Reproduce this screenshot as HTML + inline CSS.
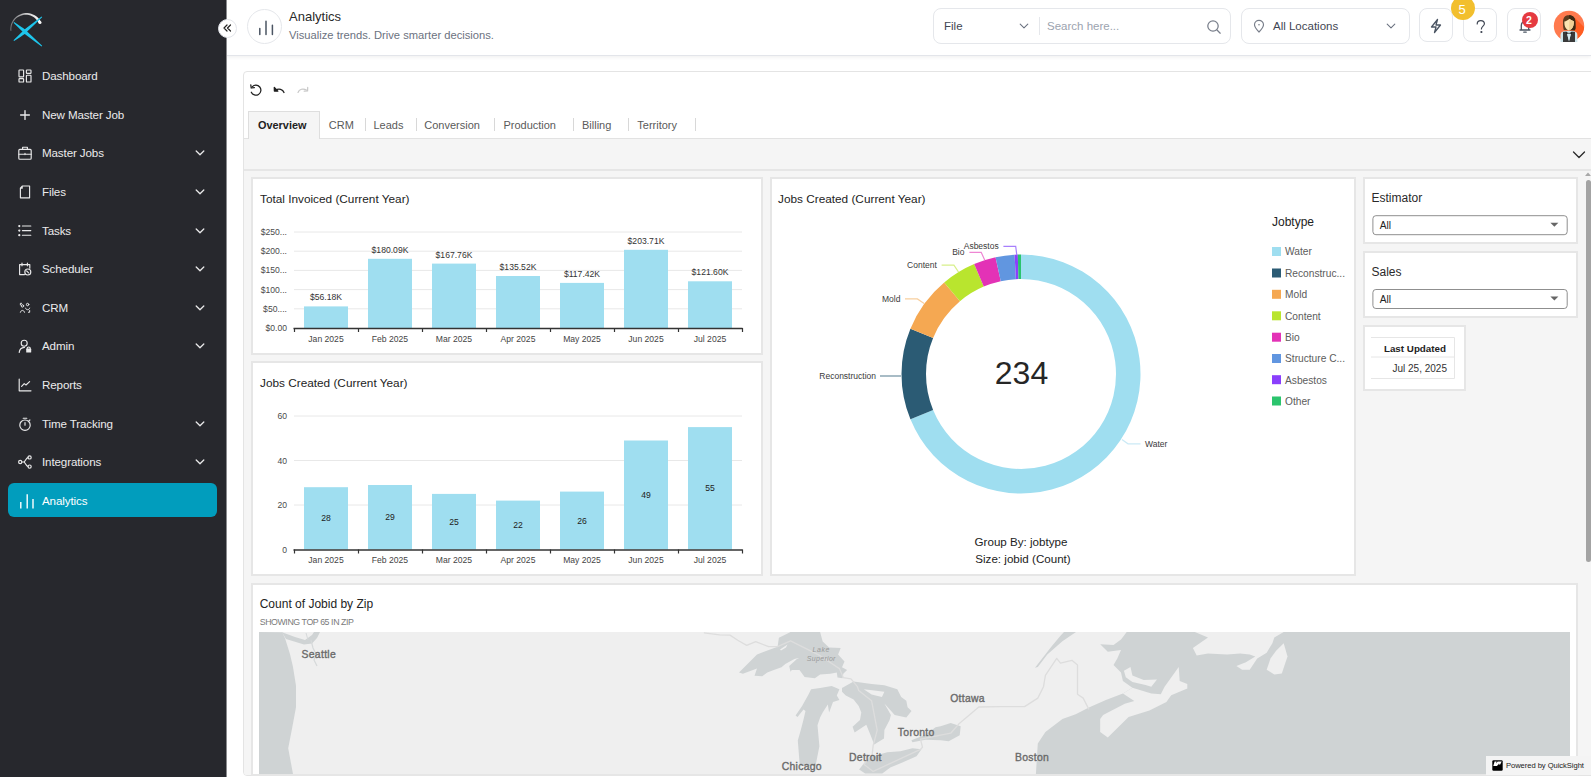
<!DOCTYPE html><html><head><meta charset="utf-8"><style>
*{box-sizing:border-box;margin:0;padding:0}
html,body{width:1591px;height:777px;overflow:hidden;background:#fff;font-family:"Liberation Sans",sans-serif;color:#222}
.a{position:absolute}
.t{position:absolute;white-space:nowrap;line-height:1}
#sb{position:absolute;left:0;top:0;width:226px;height:777px;background:#27282d}
.ni{position:absolute;left:0;width:226px;height:34px;color:#ebebec;font-size:11.6px;letter-spacing:-0.12px}
.ni .ic{position:absolute;left:18px;top:10px;width:14px;height:14px}
.ni .tx{position:absolute;left:42px;top:0;line-height:34px;white-space:nowrap}
.ni .ch{position:absolute;left:195px;top:13px;width:10px;height:8px}
#hdr{position:absolute;left:226px;top:0;width:1365px;height:56px;background:#fff;border-bottom:1.5px solid #e3e5ea;box-shadow:0 1px 4px rgba(0,0,0,0.07)}
.hb{position:absolute;border:1px solid #e5e7eb;border-radius:8px;background:#fff}
.card{position:absolute;background:#fff;border:2px solid #e6e6e6}
.ttl{position:absolute;font-size:11.8px;color:#232323;white-space:nowrap;line-height:1}
</style></head><body>
<div id="sb">
<svg class="a" style="left:0;top:0" width="60" height="55" viewBox="0 0 60 55">
<defs><linearGradient id="arcg" x1="10" y1="0" x2="41" y2="0" gradientUnits="userSpaceOnUse"><stop offset="0" stop-color="#6f7074"/><stop offset="0.5" stop-color="#c9c9ca"/><stop offset="1" stop-color="#ffffff"/></linearGradient></defs>
<path d="M10.39 30.85 L10.30 29.00 L10.43 27.16 L10.76 25.34 L11.31 23.57 L12.06 21.88 L12.99 20.28 L14.11 18.79 L15.39 17.45 L16.82 16.25 L18.38 15.23 L20.06 14.40 L21.82 13.76 L23.64 13.32 L25.51 13.10 L27.40 13.10 L29.28 13.32 L31.13 13.75 L32.93 14.39 L34.64 15.24 L36.25 16.29 L37.73 17.52 L39.07 18.91 L40.24 20.46 L41.24 22.14 L38.70 23.33 L37.99 21.86 L37.10 20.47 L36.06 19.20 L34.86 18.06 L33.53 17.06 L32.08 16.22 L30.54 15.56 L28.93 15.08 L27.27 14.80 L25.57 14.72 L23.88 14.83 L22.21 15.16 L20.58 15.67 L19.02 16.38 L17.55 17.27 L16.20 18.33 L14.98 19.55 L13.91 20.90 L13.01 22.37 L12.29 23.95 L11.76 25.59 L11.43 27.29 L11.30 29.02 L11.38 30.75 Z" fill="url(#arcg)"/>
<circle cx="40" cy="22.6" r="1.5" fill="#f4f4f4"/>
<path d="M41.61 16.56 L42.19 17.24 Q30.87 28.01 27.10 31.60 Q30.87 35.16 42.19 45.86 L41.61 46.54 Q28.99 37.06 24.78 33.90 Q22.11 35.69 14.09 41.05 L13.51 40.35 Q20.25 33.78 22.50 31.59 Q20.25 29.38 13.51 22.75 L14.09 22.05 Q22.11 27.49 24.78 29.30 Q28.99 26.11 41.61 16.56 Z" fill="#1ec6ec"/>
</svg>
<div class="ni" style="top:58.9px"><svg class="ic" viewBox="0 0 14 14" fill="none" stroke="#e9e9ea" stroke-width="1.15" stroke-linecap="round" stroke-linejoin="round"><rect x="1" y="1" width="4.6" height="6.8" rx="0.6"/><rect x="1" y="9.6" width="4.6" height="3.4" rx="0.6"/><rect x="8.4" y="1" width="4.6" height="3.4" rx="0.6"/><rect x="8.4" y="6.2" width="4.6" height="6.8" rx="0.6"/></svg><span class="tx">Dashboard</span></div>
<div class="ni" style="top:97.5px"><svg class="ic" viewBox="0 0 14 14" fill="none" stroke="#e9e9ea" stroke-width="1.15" stroke-linecap="round" stroke-linejoin="round"><path d="M7 2.6 V11.4 M2.6 7 H11.4" stroke-width="1.35"/></svg><span class="tx">New Master Job</span></div>
<div class="ni" style="top:136.2px"><svg class="ic" viewBox="0 0 14 14" fill="none" stroke="#e9e9ea" stroke-width="1.15" stroke-linecap="round" stroke-linejoin="round"><rect x="0.8" y="3.4" width="12.4" height="9.8" rx="1"/><path d="M4.6 3.4 V1.2 H9.4 V3.4 M0.8 8.2 H13.2 M7 7.4 V8.6"/></svg><span class="tx">Master Jobs</span><svg class="ch" viewBox="0 0 10 8"><path d="M1.2 2 L5 5.8 L8.8 2" fill="none" stroke="#e9e9ea" stroke-width="1.3" stroke-linecap="round" stroke-linejoin="round"/></svg></div>
<div class="ni" style="top:174.8px"><svg class="ic" viewBox="0 0 14 14" fill="none" stroke="#e9e9ea" stroke-width="1.15" stroke-linecap="round" stroke-linejoin="round"><path d="M4.2 1 H11.6 V12.8 H2.4 V3.2 Z M4.2 1 V3.2 H2.4"/></svg><span class="tx">Files</span><svg class="ch" viewBox="0 0 10 8"><path d="M1.2 2 L5 5.8 L8.8 2" fill="none" stroke="#e9e9ea" stroke-width="1.3" stroke-linecap="round" stroke-linejoin="round"/></svg></div>
<div class="ni" style="top:213.5px"><svg class="ic" viewBox="0 0 14 14" fill="none" stroke="#e9e9ea" stroke-width="1.15" stroke-linecap="round" stroke-linejoin="round"><path d="M4.4 2 H12.8 M4.4 6.6 H12.8 M4.4 11.2 H12.8"/><circle cx="1.3" cy="2" r="0.55" fill="#e9e9ea"/><circle cx="1.3" cy="6.6" r="0.55" fill="#e9e9ea"/><circle cx="1.3" cy="11.2" r="0.55" fill="#e9e9ea"/></svg><span class="tx">Tasks</span><svg class="ch" viewBox="0 0 10 8"><path d="M1.2 2 L5 5.8 L8.8 2" fill="none" stroke="#e9e9ea" stroke-width="1.3" stroke-linecap="round" stroke-linejoin="round"/></svg></div>
<div class="ni" style="top:252.2px"><svg class="ic" viewBox="0 0 14 14" fill="none" stroke="#e9e9ea" stroke-width="1.15" stroke-linecap="round" stroke-linejoin="round"><path d="M6.5 12.6 H1.6 V2.6 H11.8 V6.2 M4 1 V3.8 M9.4 1 V3.8 M1.6 2.6 H11.8"/><circle cx="9.8" cy="10" r="3"/><path d="M8.6 8.8 L10.6 10.8"/></svg><span class="tx">Scheduler</span><svg class="ch" viewBox="0 0 10 8"><path d="M1.2 2 L5 5.8 L8.8 2" fill="none" stroke="#e9e9ea" stroke-width="1.3" stroke-linecap="round" stroke-linejoin="round"/></svg></div>
<div class="ni" style="top:290.8px"><svg class="ic" viewBox="0 0 14 14" fill="none" stroke="#e9e9ea" stroke-width="1.15" stroke-linecap="round" stroke-linejoin="round"><g transform="translate(1 0.6) scale(0.86)"><circle cx="4" cy="5" r="1.4"/><circle cx="10" cy="3.4" r="1.4"/><path d="M1.6 12.4 C2.2 9.4 5.8 9.4 6.4 12.4 M7.6 7.6 C8.2 10.2 11.8 10.2 12.4 7.6 M1.6 3.8 V2 H3 M12.4 10.4 V12.4 H11"/></g></svg><span class="tx">CRM</span><svg class="ch" viewBox="0 0 10 8"><path d="M1.2 2 L5 5.8 L8.8 2" fill="none" stroke="#e9e9ea" stroke-width="1.3" stroke-linecap="round" stroke-linejoin="round"/></svg></div>
<div class="ni" style="top:329.4px"><svg class="ic" viewBox="0 0 14 14" fill="none" stroke="#e9e9ea" stroke-width="1.15" stroke-linecap="round" stroke-linejoin="round"><circle cx="6.2" cy="4.2" r="3"/><path d="M1.2 13.4 C1.6 10.2 3.6 8.6 6.4 8.4"/><rect x="8.2" y="9.6" width="5" height="3.9" rx="0.6" fill="#e9e9ea" stroke="none"/><path d="M9.2 9.8 V9 C9.2 7.6 12.2 7.6 12.2 9 V9.8"/></svg><span class="tx">Admin</span><svg class="ch" viewBox="0 0 10 8"><path d="M1.2 2 L5 5.8 L8.8 2" fill="none" stroke="#e9e9ea" stroke-width="1.3" stroke-linecap="round" stroke-linejoin="round"/></svg></div>
<div class="ni" style="top:368.1px"><svg class="ic" viewBox="0 0 14 14" fill="none" stroke="#e9e9ea" stroke-width="1.15" stroke-linecap="round" stroke-linejoin="round"><path d="M1.2 1 V12.8 H13 M3.6 8.4 L6.2 5.6 L8 7 L11.6 3.6"/></svg><span class="tx">Reports</span></div>
<div class="ni" style="top:406.7px"><svg class="ic" viewBox="0 0 14 14" fill="none" stroke="#e9e9ea" stroke-width="1.15" stroke-linecap="round" stroke-linejoin="round"><circle cx="7" cy="8.2" r="5.2"/><path d="M5.2 1.2 H8.8 M7 5.6 V8.2 M11 3.8 L11.9 3"/></svg><span class="tx">Time Tracking</span><svg class="ch" viewBox="0 0 10 8"><path d="M1.2 2 L5 5.8 L8.8 2" fill="none" stroke="#e9e9ea" stroke-width="1.3" stroke-linecap="round" stroke-linejoin="round"/></svg></div>
<div class="ni" style="top:445.4px"><svg class="ic" viewBox="0 0 14 14" fill="none" stroke="#e9e9ea" stroke-width="1.15" stroke-linecap="round" stroke-linejoin="round"><circle cx="2.2" cy="7" r="1.6"/><circle cx="11.6" cy="2.4" r="1.6"/><circle cx="11.6" cy="11.6" r="1.6"/><path d="M3.8 7 H5.6 C7.4 7 7.8 3 10 2.6 M5.6 7 C7.4 7 7.8 11 10 11.4"/></svg><span class="tx">Integrations</span><svg class="ch" viewBox="0 0 10 8"><path d="M1.2 2 L5 5.8 L8.8 2" fill="none" stroke="#e9e9ea" stroke-width="1.3" stroke-linecap="round" stroke-linejoin="round"/></svg></div>
<div class="a" style="left:8px;top:483px;width:209px;height:34px;background:#019dbd;border-radius:6px"></div>
<svg class="a" style="left:18px;top:491px" width="18" height="20" viewBox="0 0 18 20" fill="none" stroke="#fff" stroke-width="1.4"><path d="M2.8 11 V17.6 M9.2 3.3 V17.6 M15 8 V17.6"/></svg>
<span class="t" style="left:42px;top:494.5px;font-size:11.6px;letter-spacing:-0.12px;color:#fff">Analytics</span>
</div>
<div id="hdr"></div>
<div class="a" style="left:226px;top:0;width:1px;height:777px;background:#8a8b8e"></div>
<div class="a" style="left:217.5px;top:18.5px;width:19px;height:19px;border-radius:50%;background:#fff;border:1px solid #e3e5ea"></div>
<svg class="a" style="left:222px;top:23.2px" width="10" height="10" viewBox="0 0 10 10" fill="none" stroke="#222" stroke-width="1.2" stroke-linecap="round" stroke-linejoin="round"><path d="M5 2 L2 5 L5 8 M8.5 2 L5.5 5 L8.5 8"/></svg>
<div class="a" style="left:247px;top:9px;width:35px;height:35px;border-radius:50%;border:1px solid #e5e7eb"></div>
<svg class="a" style="left:254px;top:16px" width="22" height="22" viewBox="0 0 22 22" fill="none" stroke="#4b5563" stroke-width="1.5" stroke-linecap="round"><path d="M5.8 12.5 V18.5 M12 5.2 V18.5 M18.4 9.2 V18.5"/></svg>
<span class="t" style="left:289px;top:10px;font-size:13px;color:#2a2a2a">Analytics</span>
<span class="t" style="left:289px;top:29.6px;font-size:11.2px;color:#6b7280">Visualize trends. Drive smarter decisions.</span>
<div class="hb" style="left:933px;top:8px;width:298px;height:35.5px"></div>
<span class="t" style="left:944px;top:21px;font-size:11.5px;color:#3f4653">File</span>
<svg class="a" style="left:1019px;top:22px" width="10" height="8" viewBox="0 0 10 8" fill="none" stroke="#6b7280" stroke-width="1.1" stroke-linecap="round" stroke-linejoin="round"><path d="M1.2 2.2 L5 5.8 L8.8 2.2"/></svg>
<div class="a" style="left:1039px;top:17px;width:1px;height:18px;background:#e5e7eb"></div>
<span class="t" style="left:1047px;top:21px;font-size:11.5px;color:#9ca3af">Search here...</span>
<svg class="a" style="left:1205.5px;top:18.5px" width="16" height="16" viewBox="0 0 16 16" fill="none" stroke="#787e8a" stroke-width="1.25" stroke-linecap="round"><circle cx="7" cy="7" r="5.2"/><path d="M11 11 L14.2 14.2"/></svg>
<div class="hb" style="left:1241px;top:8px;width:169px;height:35.5px"></div>
<svg class="a" style="left:1252px;top:19px" width="14" height="14" viewBox="0 0 14 14" fill="none" stroke="#787e8a" stroke-width="1.15"><path d="M7 13 C7 13 11.5 8.5 11.5 5.8 C11.5 3.2 9.5 1.4 7 1.4 C4.5 1.4 2.5 3.2 2.5 5.8 C2.5 8.5 7 13 7 13 Z"/><circle cx="7" cy="5.8" r="0.8" fill="#787e8a" stroke="none"/></svg>
<span class="t" style="left:1273px;top:21px;font-size:11.5px;color:#3f4653">All Locations</span>
<svg class="a" style="left:1386px;top:22px" width="10" height="8" viewBox="0 0 10 8" fill="none" stroke="#6b7280" stroke-width="1.1" stroke-linecap="round" stroke-linejoin="round"><path d="M1.2 2.2 L5 5.8 L8.8 2.2"/></svg>
<div class="hb" style="left:1419px;top:8.4px;width:34px;height:33.2px"></div>
<div class="hb" style="left:1463px;top:8.4px;width:34px;height:33.2px"></div>
<div class="hb" style="left:1507px;top:8.4px;width:34px;height:33.2px"></div>
<svg class="a" style="left:1428px;top:18px" width="16" height="16" viewBox="0 0 16 16" fill="none" stroke="#4b5563" stroke-width="1.3" stroke-linejoin="round" stroke-linecap="round"><path d="M9.5 1.5 L3.5 9 H8 L6.5 14.5 L12.5 7 H8 Z"/></svg>
<svg class="a" style="left:1474px;top:19px" width="14" height="16" viewBox="0 0 14 16" fill="none" stroke="#3f4653" stroke-width="1.2" stroke-linecap="round"><path d="M3.2 5 C3.2 2.8 4.8 1.6 6.8 1.6 C8.8 1.6 10.4 2.9 10.4 4.8 C10.4 7 7.4 7.4 7.4 10"/><circle cx="7.4" cy="13" r="0.5" fill="#3f4653"/></svg>
<svg class="a" style="left:1517px;top:18px" width="16" height="16" viewBox="0 0 16 16" fill="none" stroke="#4b5563" stroke-width="1.3" stroke-linecap="round"><path d="M3 12 H13 M4.3 12 V7.5 C4.3 5 6 3.3 8 3.3 C10 3.3 11.7 5 11.7 7.5 V12 M6.8 14.2 H9.2"/></svg>
<div class="a" style="left:1451px;top:-4px;width:24px;height:24px;border-radius:50%;background:#f2bf2e"></div>
<span class="t" style="left:1458.5px;top:3px;font-size:13px;color:#fff">5</span>
<div class="a" style="left:1521.5px;top:12px;width:16px;height:16px;border-radius:50%;background:#e53a40"></div>
<span class="t" style="left:1526px;top:14.5px;font-size:10.5px;font-weight:bold;color:#fff">2</span>
<svg class="a" style="left:1553px;top:9px" width="32" height="34" viewBox="1553 9 32 34">
<defs><clipPath id="avc"><circle cx="1569" cy="26" r="15.2"/></clipPath></defs>
<circle cx="1569" cy="26" r="15.2" fill="#ff7a4e"/>
<g clip-path="url(#avc)">
<path d="M1575 18 L1590 33 L1590 45 L1572 45 Z" fill="#ff5d22"/>
</g>
<path d="M1560.5 42 L1560.5 35 C1560.5 32.5 1562 31.5 1565 31 L1573 31 C1576 31.5 1577.4 32.5 1577.4 35 L1577.4 42 Z" fill="#cfe6ec"/>
<path d="M1563 42 L1563 32 L1566.5 31.5 L1569 41 L1571.5 31.5 L1575 32 L1575 42 Z" fill="#3a3a3a"/>
<path d="M1567 33.5 L1569 41.5 L1571 33.5 Z" fill="#d8ecf1"/>
<path d="M1566 32 L1569 33 L1572 32 L1572 34 L1569 33.4 L1566 34 Z" fill="#222"/>
<path d="M1563 22 C1563 17 1565.5 15.2 1569 15.2 C1573 15.2 1575.4 17.5 1575.4 22 C1575.4 26 1576 29 1574.8 30.2 L1563.8 30 C1563 27 1563 25 1563 22 Z" fill="#5b3b1e"/>
<path d="M1569 15.2 C1573 15.2 1575.4 17.5 1575.4 22 C1575.4 26 1576 29 1574.8 30.2 L1569 30.2 Z" fill="#3f2812"/>
<path d="M1564.4 21.5 C1566 21.5 1568 20 1569.5 18.8 C1570.5 20 1572.5 21 1573.8 21.2 C1574 25 1573 29 1569 30.4 C1565.5 29.5 1564.2 26 1564.4 21.5 Z" fill="#fbe3b0"/>
<path d="M1569.5 18.8 C1570.5 20 1572.5 21 1573.8 21.2 C1574 25 1573 29 1569 30.4 Z" fill="#f1cf94"/>
</svg>
<div class="a" style="left:243px;top:71px;width:1360px;height:705px;border:1px solid #e4e4e4;border-radius:4px;background:#fff"></div>
<svg class="a" style="left:249px;top:83px" width="14" height="14" viewBox="0 0 14 14" fill="none" stroke="#1f1f1f" stroke-width="1.25" stroke-linecap="round" stroke-linejoin="round"><path d="M2.3 9.2 A5 5 0 1 0 3.2 3.8"/><path d="M1.8 1.8 L2.2 5 L5.4 4.6" fill="none"/></svg>
<svg class="a" style="left:272px;top:83px" width="14" height="14" viewBox="0 0 14 14" fill="none" stroke="#1f1f1f" stroke-width="1.3" stroke-linecap="round" stroke-linejoin="round"><path d="M12 9.5 C10.8 6.2 7 5 3.2 7.2"/><path d="M2.3 4.4 L2.4 8 L5.8 8.2 Z" fill="#1f1f1f"/></svg>
<svg class="a" style="left:296px;top:83px" width="14" height="14" viewBox="0 0 14 14" fill="none" stroke="#c8c8c8" stroke-width="1.2" stroke-linecap="round" stroke-linejoin="round"><path d="M2 9.5 C3.2 6.2 7 5 10.8 7.2"/><path d="M11.7 4.4 L11.6 8 L8.2 8.2"/></svg>
<div class="a" style="left:244px;top:137.5px;width:1347px;height:637.5px;background:#f5f5f5;border-top:1px solid #e2e2e2;border-bottom-left-radius:3px"></div>
<div class="a" style="left:248px;top:111px;width:72px;height:28px;background:#f5f5f5;border:1px solid #dedede;border-bottom:none"></div>
<span class="t" style="left:258px;top:120px;font-size:10.9px;font-weight:bold;color:#222">Overview</span>
<span class="t" style="left:328.8px;top:120px;font-size:11px;color:#5a5a5a">CRM</span>
<div class="a" style="left:364.5px;top:118px;width:1px;height:13px;background:#d8d8d8"></div>
<span class="t" style="left:373.5px;top:120px;font-size:11px;color:#5a5a5a">Leads</span>
<div class="a" style="left:415.7px;top:118px;width:1px;height:13px;background:#d8d8d8"></div>
<span class="t" style="left:424.3px;top:120px;font-size:11px;color:#5a5a5a">Conversion</span>
<div class="a" style="left:493.6px;top:118px;width:1px;height:13px;background:#d8d8d8"></div>
<span class="t" style="left:503.4px;top:120px;font-size:11px;color:#5a5a5a">Production</span>
<div class="a" style="left:572.5px;top:118px;width:1px;height:13px;background:#d8d8d8"></div>
<span class="t" style="left:582px;top:120px;font-size:11px;color:#5a5a5a">Billing</span>
<div class="a" style="left:628px;top:118px;width:1px;height:13px;background:#d8d8d8"></div>
<span class="t" style="left:637.3px;top:120px;font-size:11px;color:#5a5a5a">Territory</span>
<div class="a" style="left:695.4px;top:118px;width:1px;height:13px;background:#d8d8d8"></div>
<svg class="a" style="left:1572px;top:149.5px" width="14" height="10" viewBox="0 0 14 10" fill="none" stroke="#2a2a2a" stroke-width="1.3" stroke-linecap="round" stroke-linejoin="round"><path d="M1.5 2 L7 7.5 L12.5 2"/></svg>
<div class="a" style="left:244px;top:169px;width:1347px;height:1.5px;background:#e6e6e6"></div>
<svg class="a" style="left:1584px;top:170px" width="8" height="8" viewBox="0 0 8 8"><path d="M1 6 L4 2.5 L7 6 Z" fill="#a8a8a8"/></svg>
<div class="a" style="left:1586px;top:180px;width:4.5px;height:382px;border-radius:3px;background:#a3a3a3"></div>
<div class="card" style="left:251px;top:177.3px;width:512px;height:177.3px"></div>
<div class="card" style="left:251px;top:361px;width:512px;height:214.70000000000005px"></div>
<div class="card" style="left:770px;top:177.3px;width:585.5999999999999px;height:398.40000000000003px"></div>
<div class="card" style="left:1362.6px;top:177.2px;width:215.20000000000005px;height:67.0px"></div>
<div class="card" style="left:1362.6px;top:251.1px;width:215.20000000000005px;height:67.1px"></div>
<div class="card" style="left:1362.6px;top:325px;width:103.40000000000009px;height:66px"></div>
<div class="card" style="left:251px;top:582.6px;width:1326.8px;height:193.0px"></div>
<span class="ttl" style="left:260px;top:193.5px">Total Invoiced (Current Year)</span>
<span class="ttl" style="left:260px;top:377.5px">Jobs Created (Current Year)</span>
<span class="ttl" style="left:778px;top:193.5px">Jobs Created (Current Year)</span>
<svg class="a" style="left:0;top:0" width="1591" height="777" viewBox="0 0 1591 777" font-family="Liberation Sans, sans-serif">
<line x1="294" y1="308.8" x2="742" y2="308.8" stroke="#e8e8e8" stroke-width="1"/>
<line x1="294" y1="289.6" x2="742" y2="289.6" stroke="#e8e8e8" stroke-width="1"/>
<line x1="294" y1="270.4" x2="742" y2="270.4" stroke="#e8e8e8" stroke-width="1"/>
<line x1="294" y1="251.2" x2="742" y2="251.2" stroke="#e8e8e8" stroke-width="1"/>
<line x1="294" y1="232.0" x2="742" y2="232.0" stroke="#e8e8e8" stroke-width="1"/>
<text x="287" y="331.0" font-size="8.6" fill="#4a4a4a" text-anchor="end">$0.00</text>
<text x="287" y="311.8" font-size="8.6" fill="#4a4a4a" text-anchor="end">$50....</text>
<text x="287" y="292.6" font-size="8.6" fill="#4a4a4a" text-anchor="end">$100...</text>
<text x="287" y="273.4" font-size="8.6" fill="#4a4a4a" text-anchor="end">$150...</text>
<text x="287" y="254.2" font-size="8.6" fill="#4a4a4a" text-anchor="end">$200...</text>
<text x="287" y="235.0" font-size="8.6" fill="#4a4a4a" text-anchor="end">$250...</text>
<rect x="304" y="306.4" width="44" height="21.6" fill="#9fdef0"/>
<text x="326" y="300.4" font-size="8.6" fill="#333" text-anchor="middle">$56.18K</text>
<text x="326" y="341.5" font-size="8.6" fill="#444" text-anchor="middle">Jan 2025</text>
<rect x="368" y="258.8" width="44" height="69.2" fill="#9fdef0"/>
<text x="390" y="252.8" font-size="8.6" fill="#333" text-anchor="middle">$180.09K</text>
<text x="390" y="341.5" font-size="8.6" fill="#444" text-anchor="middle">Feb 2025</text>
<rect x="432" y="263.6" width="44" height="64.4" fill="#9fdef0"/>
<text x="454" y="257.6" font-size="8.6" fill="#333" text-anchor="middle">$167.76K</text>
<text x="454" y="341.5" font-size="8.6" fill="#444" text-anchor="middle">Mar 2025</text>
<rect x="496" y="276.0" width="44" height="52.0" fill="#9fdef0"/>
<text x="518" y="270.0" font-size="8.6" fill="#333" text-anchor="middle">$135.52K</text>
<text x="518" y="341.5" font-size="8.6" fill="#444" text-anchor="middle">Apr 2025</text>
<rect x="560" y="282.9" width="44" height="45.1" fill="#9fdef0"/>
<text x="582" y="276.9" font-size="8.6" fill="#333" text-anchor="middle">$117.42K</text>
<text x="582" y="341.5" font-size="8.6" fill="#444" text-anchor="middle">May 2025</text>
<rect x="624" y="249.8" width="44" height="78.2" fill="#9fdef0"/>
<text x="646" y="243.8" font-size="8.6" fill="#333" text-anchor="middle">$203.71K</text>
<text x="646" y="341.5" font-size="8.6" fill="#444" text-anchor="middle">Jun 2025</text>
<rect x="688" y="281.3" width="44" height="46.7" fill="#9fdef0"/>
<text x="710" y="275.3" font-size="8.6" fill="#333" text-anchor="middle">$121.60K</text>
<text x="710" y="341.5" font-size="8.6" fill="#444" text-anchor="middle">Jul 2025</text>
<line x1="293.5" y1="328.5" x2="742.5" y2="328.5" stroke="#333" stroke-width="1.3"/>
<line x1="294.5" y1="328.0" x2="294.5" y2="332.0" stroke="#333" stroke-width="1.2"/>
<line x1="358.5" y1="328.0" x2="358.5" y2="332.0" stroke="#333" stroke-width="1.2"/>
<line x1="422.5" y1="328.0" x2="422.5" y2="332.0" stroke="#333" stroke-width="1.2"/>
<line x1="486.5" y1="328.0" x2="486.5" y2="332.0" stroke="#333" stroke-width="1.2"/>
<line x1="550.5" y1="328.0" x2="550.5" y2="332.0" stroke="#333" stroke-width="1.2"/>
<line x1="614.5" y1="328.0" x2="614.5" y2="332.0" stroke="#333" stroke-width="1.2"/>
<line x1="678.5" y1="328.0" x2="678.5" y2="332.0" stroke="#333" stroke-width="1.2"/>
<line x1="742.5" y1="328.0" x2="742.5" y2="332.0" stroke="#333" stroke-width="1.2"/>
<text x="287" y="552.5" font-size="8.6" fill="#4a4a4a" text-anchor="end">0</text>
<line x1="294" y1="505.0" x2="742" y2="505.0" stroke="#e8e8e8" stroke-width="1"/>
<text x="287" y="508.0" font-size="8.6" fill="#4a4a4a" text-anchor="end">20</text>
<line x1="294" y1="460.5" x2="742" y2="460.5" stroke="#e8e8e8" stroke-width="1"/>
<text x="287" y="463.5" font-size="8.6" fill="#4a4a4a" text-anchor="end">40</text>
<line x1="294" y1="416.0" x2="742" y2="416.0" stroke="#e8e8e8" stroke-width="1"/>
<text x="287" y="419.0" font-size="8.6" fill="#4a4a4a" text-anchor="end">60</text>
<rect x="304" y="487.2" width="44" height="62.3" fill="#9fdef0"/>
<text x="326" y="521.4" font-size="8.6" fill="#222" text-anchor="middle">28</text>
<text x="326" y="563.0" font-size="8.6" fill="#444" text-anchor="middle">Jan 2025</text>
<rect x="368" y="485.0" width="44" height="64.5" fill="#9fdef0"/>
<text x="390" y="520.2" font-size="8.6" fill="#222" text-anchor="middle">29</text>
<text x="390" y="563.0" font-size="8.6" fill="#444" text-anchor="middle">Feb 2025</text>
<rect x="432" y="493.9" width="44" height="55.6" fill="#9fdef0"/>
<text x="454" y="524.7" font-size="8.6" fill="#222" text-anchor="middle">25</text>
<text x="454" y="563.0" font-size="8.6" fill="#444" text-anchor="middle">Mar 2025</text>
<rect x="496" y="500.6" width="44" height="48.9" fill="#9fdef0"/>
<text x="518" y="528.0" font-size="8.6" fill="#222" text-anchor="middle">22</text>
<text x="518" y="563.0" font-size="8.6" fill="#444" text-anchor="middle">Apr 2025</text>
<rect x="560" y="491.6" width="44" height="57.9" fill="#9fdef0"/>
<text x="582" y="523.6" font-size="8.6" fill="#222" text-anchor="middle">26</text>
<text x="582" y="563.0" font-size="8.6" fill="#444" text-anchor="middle">May 2025</text>
<rect x="624" y="440.5" width="44" height="109.0" fill="#9fdef0"/>
<text x="646" y="498.0" font-size="8.6" fill="#222" text-anchor="middle">49</text>
<text x="646" y="563.0" font-size="8.6" fill="#444" text-anchor="middle">Jun 2025</text>
<rect x="688" y="427.1" width="44" height="122.4" fill="#9fdef0"/>
<text x="710" y="491.3" font-size="8.6" fill="#222" text-anchor="middle">55</text>
<text x="710" y="563.0" font-size="8.6" fill="#444" text-anchor="middle">Jul 2025</text>
<line x1="293.5" y1="550.0" x2="742.5" y2="550.0" stroke="#333" stroke-width="1.3"/>
<line x1="294.5" y1="549.5" x2="294.5" y2="553.5" stroke="#333" stroke-width="1.2"/>
<line x1="358.5" y1="549.5" x2="358.5" y2="553.5" stroke="#333" stroke-width="1.2"/>
<line x1="422.5" y1="549.5" x2="422.5" y2="553.5" stroke="#333" stroke-width="1.2"/>
<line x1="486.5" y1="549.5" x2="486.5" y2="553.5" stroke="#333" stroke-width="1.2"/>
<line x1="550.5" y1="549.5" x2="550.5" y2="553.5" stroke="#333" stroke-width="1.2"/>
<line x1="614.5" y1="549.5" x2="614.5" y2="553.5" stroke="#333" stroke-width="1.2"/>
<line x1="678.5" y1="549.5" x2="678.5" y2="553.5" stroke="#333" stroke-width="1.2"/>
<line x1="742.5" y1="549.5" x2="742.5" y2="553.5" stroke="#333" stroke-width="1.2"/>
<path d="M1021.00 254.50 A119.5 119.5 0 1 1 910.44 419.36 L933.11 410.06 A95.0 95.0 0 1 0 1021.00 279.00 Z" fill="#9fdef0"/>
<path d="M910.44 419.36 A119.5 119.5 0 0 1 910.44 328.64 L933.11 337.94 A95.0 95.0 0 0 0 933.11 410.06 Z" fill="#2b5b74"/>
<path d="M910.44 328.64 A119.5 119.5 0 0 1 944.19 282.46 L959.94 301.23 A95.0 95.0 0 0 0 933.11 337.94 Z" fill="#f5a852"/>
<path d="M944.19 282.46 A119.5 119.5 0 0 1 974.16 264.06 L983.76 286.60 A95.0 95.0 0 0 0 959.94 301.23 Z" fill="#b9e52e"/>
<path d="M974.16 264.06 A119.5 119.5 0 0 1 995.53 257.25 L1000.75 281.18 A95.0 95.0 0 0 0 983.76 286.60 Z" fill="#e332b6"/>
<path d="M995.53 257.25 A119.5 119.5 0 0 1 1014.59 254.67 L1015.90 279.14 A95.0 95.0 0 0 0 1000.75 281.18 Z" fill="#6196e0"/>
<path d="M1014.59 254.67 A119.5 119.5 0 0 1 1017.79 254.54 L1018.45 279.03 A95.0 95.0 0 0 0 1015.90 279.14 Z" fill="#8a3ffc"/>
<path d="M1017.79 254.54 A119.5 119.5 0 0 1 1021.00 254.50 L1021.00 279.00 A95.0 95.0 0 0 0 1018.45 279.03 Z" fill="#2bc46d"/>
<text x="1021.5" y="384.2" font-size="32" fill="#262626" text-anchor="middle">234</text>
<path d="M1121.9 439.6 L1128 443.8 L1140.5 443.8" fill="none" stroke="#cbeaf6" stroke-width="1.2"/>
<text x="1145" y="446.8" font-size="8.5" fill="#3a3a3a" text-anchor="start">Water</text>
<path d="M901 376 L880 376" fill="none" stroke="#6e8fa0" stroke-width="1.2"/>
<text x="876" y="379" font-size="8.5" fill="#3a3a3a" text-anchor="end">Reconstruction</text>
<path d="M924.1 303.5 L917.4 298.9 L905 298.9" fill="none" stroke="#f8cf9f" stroke-width="1.2"/>
<text x="900.4" y="301.9" font-size="8.5" fill="#3a3a3a" text-anchor="end">Mold</text>
<path d="M958.6 272.1 L953.9 265.2 L941.6 265.2" fill="none" stroke="#d8f08a" stroke-width="1.2"/>
<text x="936.9" y="268.2" font-size="8.5" fill="#3a3a3a" text-anchor="end">Content</text>
<path d="M984.8 260.2 L981.2 252.3 L969.4 252.3" fill="none" stroke="#ee86d3" stroke-width="1.2"/>
<text x="964.5" y="255.3" font-size="8.5" fill="#3a3a3a" text-anchor="end">Bio</text>
<path d="M1016.8 255.1 L1015.7 246.3 L1003.4 246.3" fill="none" stroke="#a77ffc" stroke-width="1.2"/>
<text x="998.7" y="249.3" font-size="8.5" fill="#3a3a3a" text-anchor="end">Asbestos</text>
<text x="1272" y="226" font-size="12" fill="#222">Jobtype</text>
<rect x="1272" y="247.0" width="9" height="9" fill="#9fdef0"/>
<text x="1285" y="255.3" font-size="10.2" fill="#5c5c5c">Water</text>
<rect x="1272" y="268.5" width="9" height="9" fill="#2b5b74"/>
<text x="1285" y="276.8" font-size="10.2" fill="#5c5c5c">Reconstruc...</text>
<rect x="1272" y="289.8" width="9" height="9" fill="#f5a852"/>
<text x="1285" y="298.1" font-size="10.2" fill="#5c5c5c">Mold</text>
<rect x="1272" y="311.3" width="9" height="9" fill="#b9e52e"/>
<text x="1285" y="319.6" font-size="10.2" fill="#5c5c5c">Content</text>
<rect x="1272" y="332.7" width="9" height="9" fill="#e332b6"/>
<text x="1285" y="341.0" font-size="10.2" fill="#5c5c5c">Bio</text>
<rect x="1272" y="354.0" width="9" height="9" fill="#6196e0"/>
<text x="1285" y="362.3" font-size="10.2" fill="#5c5c5c">Structure C...</text>
<rect x="1272" y="375.2" width="9" height="9" fill="#8a3ffc"/>
<text x="1285" y="383.5" font-size="10.2" fill="#5c5c5c">Asbestos</text>
<rect x="1272" y="396.5" width="9" height="9" fill="#2bc46d"/>
<text x="1285" y="404.8" font-size="10.2" fill="#5c5c5c">Other</text>
<text x="1021" y="546" font-size="11.6" fill="#222" text-anchor="middle">Group By: jobtype</text>
<text x="1023" y="563" font-size="11.6" fill="#222" text-anchor="middle">Size: jobid (Count)</text>
<text x="1371.5" y="202.0" font-size="12" fill="#2a2a2a">Estimator</text>
<rect x="1372.9" y="215.7" width="194.3" height="19" rx="3" fill="#fff" stroke="#8f8f8f" stroke-width="1"/>
<text x="1379.7" y="228.7" font-size="10.2" fill="#222">All</text>
<path d="M1550.4 222.79999999999998 L1558.4 222.79999999999998 L1554.4 226.79999999999998 Z" fill="#666"/>
<text x="1371.5" y="275.7" font-size="12" fill="#2a2a2a">Sales</text>
<rect x="1372.9" y="289.5" width="194.3" height="19" rx="3" fill="#fff" stroke="#8f8f8f" stroke-width="1"/>
<text x="1379.7" y="302.5" font-size="10.2" fill="#222">All</text>
<path d="M1550.4 296.6 L1558.4 296.6 L1554.4 300.6 Z" fill="#666"/>
<path d="M1371 337.5 H1454.5 V378.5 H1371 M1371 357 H1454.5" fill="none" stroke="#e6e6e6" stroke-width="1"/>
<text x="1446" y="351.5" font-size="9.8" font-weight="bold" fill="#222" text-anchor="end">Last Updated</text>
<text x="1447" y="372" font-size="10" fill="#333" text-anchor="end">Jul 25, 2025</text>
</svg>
<span class="ttl" style="left:259.7px;top:597.5px;font-size:12px">Count of Jobid by Zip</span>
<span class="t" style="left:259.7px;top:617.8px;font-size:8.8px;letter-spacing:-0.42px;color:#7a7a7a">SHOWING TOP 65 IN ZIP</span>
<svg class="a" style="left:259px;top:632px" width="1311" height="142" viewBox="259 632 1311 142">
<rect x="259" y="632" width="1311" height="142" fill="#efefef"/>
<path d="M259.0 632.0 L282.3 632.3 L285.2 638.7 L290.1 654.4 L293.0 667.0 L296.0 685.7 L296.0 707.2 L292.0 728.7 L288.2 748.3 L293.0 774.0 L259.0 774.0 Z" fill="#cfd3d4"/>
<path d="M282.0 632.3 L295.0 637.0 L305.0 640.0 L312.0 635.0 L314.0 632.0 L320.0 632.0 L317.0 638.0 L312.0 643.5 L304.0 644.5 L286.0 639.0 Z" fill="#cfd3d4"/>
<path d="M311 640 L313 648 L316 654 L314 660 L317 666" fill="none" stroke="#d6d9da" stroke-width="1.2"/>
<path d="M306 633 L308 640" fill="none" stroke="#d6d9da" stroke-width="1"/>
<path d="M739.0 672.5 L757.0 654.5 L777.6 646.7 L778.9 637.7 L786.6 633.9 L790.5 632.0 L820.1 632.0 L822.7 641.6 L829.1 647.4 L840.7 648.0 L838.1 654.5 L844.5 661.5 L842.0 667.3 L847.1 669.9 L843.3 673.8 L842.6 678.3 L837.5 677.6 L836.8 672.5 L830.4 673.8 L820.1 674.4 L814.9 678.3 L804.6 677.0 L799.5 669.9 L791.8 669.9 L790.5 671.8 L789.2 666.0 L796.9 659.0 L799.5 657.7 L794.4 659.0 L785.3 664.1 L781.5 667.3 L773.8 669.9 L767.3 672.5 L762.2 676.3 L754.5 675.7 L757.0 668.6 L742.9 673.8 Z" fill="#cfd3d4"/>
<path d="M780.0 649.5 L787.5 644.5 L786.0 647.5 L781.0 650.5 Z" fill="#efefef"/>
<path d="M795.6 715.6 L802.1 705.9 L808.5 694.4 L811.1 689.2 L820.1 687.9 L831.7 686.0 L839.4 689.2 L836.8 695.6 L839.4 700.1 L833.0 702.1 L829.1 712.4 L827.8 704.6 L822.7 712.4 L820.1 717.5 L817.5 725.2 L819.4 746.3 L815.5 765.9 L799.8 765.9 L797.8 740.5 L800.8 730.0 L803.4 720.1 L805.5 711.0 L803.5 709.5 L797.5 717.0 Z" fill="#cfd3d4"/>
<path d="M842.0 687.9 L853.6 681.5 L871.6 684.1 L884.4 685.3 L897.3 689.2 L901.2 696.9 L906.3 700.8 L907.6 707.2 L911.5 711.1 L906.3 717.5 L894.7 714.9 L884.4 703.4 L890.9 714.9 L889.6 720.1 L884.4 730.0 L884.0 738.5 L874.2 744.4 L870.3 734.6 L866.3 724.8 L854.6 732.6 L852.6 726.8 L860.0 720.1 L861.3 712.4 L858.7 705.9 L853.6 699.5 L845.8 695.6 L842.0 691.8 Z" fill="#cfd3d4"/>
<path d="M863.8 689.2 L884.4 691.8 L881.9 696.9 L871.6 694.4 Z" fill="#efefef"/>
<path d="M859.1 769.4 L866.2 760.4 L873.2 756.3 L887.3 752.3 L900.4 751.3 L912.4 748.3 L921.5 749.3 L916.5 756.3 L902.4 762.4 L890.3 767.4 L882.3 773.4 L865.2 773.4 Z" fill="#cfd3d4"/>
<path d="M911.4 740.2 L925.0 735.0 L935.6 727.2 L940.6 726.2 L950.7 723.1 L960.7 726.2 L959.7 735.2 L948.7 741.2 L940.6 740.2 L925.5 739.7 L912.4 742.3 Z" fill="#cfd3d4"/>
<path d="M1035.0 667.8 L1051.1 647.0 L1060.5 635.7 L1064.0 632.0 L1076.0 632.0 L1062.4 641.3 L1047.3 654.6 L1037.8 666.9 Z" fill="#cfd3d4"/>
<path d="M1035.9 774.0 L1037.8 743.5 L1045.4 732.1 L1062.4 718.9 L1075.7 714.2 L1088.9 707.5 L1105.9 700.0 L1122.9 693.4 L1132.4 687.7 L1122.9 681.1 L1121.0 672.6 L1113.5 665.0 L1117.3 658.4 L1121.0 649.9 L1107.8 651.8 L1100.2 644.2 L1113.5 645.1 L1121.0 639.5 L1126.7 632.0 L1570.0 632.0 L1570.0 774.0 Z" fill="#cfd3d4"/>
<path d="M1122.9 693.4 L1134.3 700.9 L1124.8 703.8 L1103.1 715.1 L1100.2 718.9 L1100.2 732.1 L1107.8 737.4 L1121.0 724.6 L1128.6 717.0 L1149.4 710.4 L1166.4 701.9 L1171.2 695.3 L1187.3 688.6 L1187.3 683.9 L1179.7 681.1 L1178.7 666.9 L1164.6 686.7 L1160.8 694.3 L1151.3 693.4 L1132.4 687.7 Z" fill="#efefef"/>
<path d="M1123.9 670.7 L1130.5 666.9 L1132.4 675.4 L1143.7 680.1 L1157.0 679.6 L1151.3 686.7 L1145.6 684.9 L1132.4 682.0 L1125.8 677.3 Z" fill="#efefef"/>
<path d="M1194.8 632.0 L1208.0 637.6 L1192.9 648.0 L1196.7 655.5 L1208.0 653.6 L1227.0 654.6 L1240.2 653.6 L1249.7 654.6 L1255.3 656.5 L1245.9 662.2 L1236.4 665.9 L1242.1 669.7 L1249.7 669.7 L1257.2 658.4 L1266.7 652.7 L1272.4 643.2 L1274.3 637.6 L1283.7 632.0 Z" fill="#efefef"/>
<path d="M1266.7 669.7 L1274.3 674.4 L1281.8 673.5 L1287.5 656.5 L1283.7 643.2 L1276.1 650.8 L1270.5 658.4 Z" fill="#efefef"/>
<path d="M703.9 632.8 L719.6 634.8 L730 635.1 L737.7 640.3 L746.7 645.4 L755.7 641.6 L768.6 646.7 L777.6 646.7 L790.5 640.9 L820.1 655.7 L839.4 668.6 L843.3 677.6 L851 678.9 L857.4 686.6 L858.7 690.5 L871.6 700.8 L877.2 730.2 L873.2 745.3 L872.2 754.3 L864.1 764.4 L873.2 771.4 L920.5 749.3 L922.5 747.3 L920.5 739.2 L950.7 733.2 L958.7 724.1 L965.8 718.1 L978.8 707 L1000 706.6 L1024.6 706.6 L1037.8 698.1 L1043.5 686.7 L1045.4 675.4 L1056.7 658.4 L1060.5 663.1 L1071.9 660.3 L1077.5 665 L1077.5 694.3 L1083.2 698.1 L1088.9 709.4" fill="none" stroke="#dddddd" stroke-width="1.3" stroke-linejoin="round"/>
<text x="318.8" y="657.5" font-size="10.4" fill="#6a6a6a" stroke="#6a6a6a" stroke-width="0.35" letter-spacing="0.3" text-anchor="middle" font-family="Liberation Sans, sans-serif">Seattle</text>
<text x="801.8" y="769.5" font-size="10.4" fill="#6a6a6a" stroke="#6a6a6a" stroke-width="0.35" letter-spacing="0.3" text-anchor="middle" font-family="Liberation Sans, sans-serif">Chicago</text>
<text x="865.4" y="761.2" font-size="10.4" fill="#6a6a6a" stroke="#6a6a6a" stroke-width="0.35" letter-spacing="0.3" text-anchor="middle" font-family="Liberation Sans, sans-serif">Detroit</text>
<text x="916.2" y="736.2" font-size="10.4" fill="#6a6a6a" stroke="#6a6a6a" stroke-width="0.35" letter-spacing="0.3" text-anchor="middle" font-family="Liberation Sans, sans-serif">Toronto</text>
<text x="967.5" y="701.6" font-size="10.4" fill="#6a6a6a" stroke="#6a6a6a" stroke-width="0.35" letter-spacing="0.3" text-anchor="middle" font-family="Liberation Sans, sans-serif">Ottawa</text>
<text x="1032.1" y="760.9000000000001" font-size="10.4" fill="#6a6a6a" stroke="#6a6a6a" stroke-width="0.35" letter-spacing="0.3" text-anchor="middle" font-family="Liberation Sans, sans-serif">Boston</text>
<text x="821.3" y="652" font-size="7" font-style="italic" fill="#9a9a9a" text-anchor="middle" font-family="Liberation Sans, sans-serif" letter-spacing="0.6">Lake</text>
<text x="821.3" y="661" font-size="7" font-style="italic" fill="#9a9a9a" text-anchor="middle" font-family="Liberation Sans, sans-serif" letter-spacing="0.3">Superior</text>
</svg>
<div class="a" style="left:1486px;top:755.5px;width:105px;height:19.5px;background:#f4f4f4"></div>
<svg class="a" style="left:1492px;top:759.5px" width="11" height="11" viewBox="0 0 11 11"><rect x="0.3" y="0.3" width="10.4" height="10.4" rx="1.2" fill="#000"/><path d="M1.3 6 L2.6 1.4 L4.6 1.4 L4.2 3.4 L5.6 1.4 L9.7 1.4 L8.2 4.6 L6.6 4.6 L7.4 3 L5 6 Z" fill="#fff"/></svg>
<span class="t" style="left:1506px;top:762.3px;font-size:7.6px;color:#1a1a1a;letter-spacing:-0.05px">Powered by QuickSight</span>
</body></html>
